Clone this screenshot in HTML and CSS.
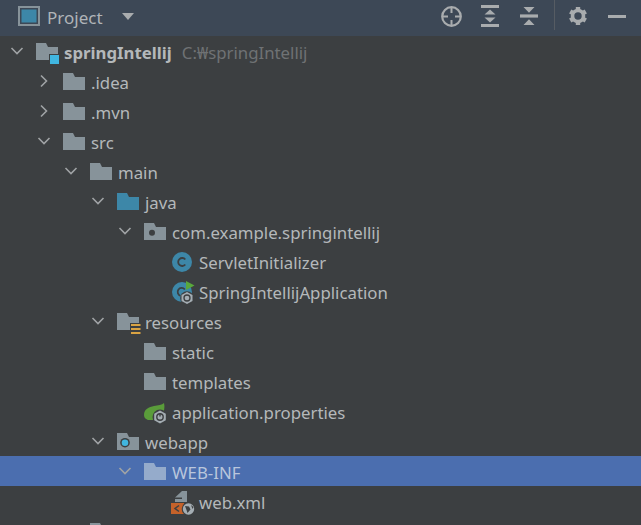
FILE: index.html
```html
<!DOCTYPE html>
<html lang="en">
<head>
<meta charset="utf-8">
<title>Project</title>
<link rel="stylesheet" href="styles.css">
</head>
<body>
<svg class="defs" width="0" height="0" aria-hidden="true">
  <symbol id="down" viewBox="0 0 14 14"><path d="M1.500 4 7 9.500 12.500 4" fill="none" stroke="#a0a3a5" stroke-width="1.600"/></symbol>
  <symbol id="right" viewBox="0 0 14 14"><path d="M4 1.500 9.500 7 4 12.500" fill="none" stroke="#a0a3a5" stroke-width="1.600"/></symbol>
  <symbol id="folder" viewBox="0 0 22 22"><path d="M0 3h10l2 4h10v13H0z" fill="#87939a"/></symbol>
  <symbol id="folder-blue" viewBox="0 0 22 22"><path d="M0 3h10l2 4h10v13H0z" fill="#3d87a8"/></symbol>
  <symbol id="folder-sel" viewBox="0 0 22 22"><path d="M0 3h10l2 4h10v13H0z" fill="#95abcb"/></symbol>
  <symbol id="folder-pkg" viewBox="0 0 22 22"><path d="M0 3h10l2 4h10v13H0z" fill="#87939a"/><circle cx="8" cy="12.700" r="3" fill="#3c3f41"/></symbol>
  <symbol id="folder-web" viewBox="0 0 22 22"><path d="M0 3h10l2 4h10v13H0z" fill="#87939a"/><circle cx="8" cy="12.700" r="4.800" fill="#3c3f41"/><circle cx="8" cy="12.700" r="3.300" fill="#40b6e0"/></symbol>
  <symbol id="cls" viewBox="0 0 22 22"><circle cx="11" cy="12" r="10" fill="#3d87a8"/><path d="M14.300 9.500A4 4 0 1 0 14.300 14.500" fill="none" stroke="#3c3f41" stroke-width="1.800"/></symbol>
  <symbol id="folder-root" viewBox="0 0 24 26"><path d="M0 5h10l2 4h10v7h-9v6H0z" fill="#87939a"/><rect x="14" y="17" width="9" height="9" fill="#40b6e0"/></symbol>
  <symbol id="folder-res" viewBox="0 0 24 26"><path d="M0 5h10l2 4h10v6h-9v7H0z" fill="#87939a"/><path d="M14 16h9.500v2H14zM14 20h9.500v2H14zM14 24h9.500v2H14z" fill="#d9a343"/></symbol>
  <symbol id="cls-spring" viewBox="0 0 24 26"><circle cx="11" cy="14" r="10" fill="#3d87a8"/><path d="M13.800 11.500A4 4 0 1 0 9.500 17.800" fill="none" stroke="#3c3f41" stroke-width="1.800"/><path d="M15 3l8.500 4.500L15 12z" fill="#59a83c"/><circle cx="16" cy="20" r="6.800" fill="#3c3f41"/><path d="M16 14l5.500 3v6L16 26l-5.500-3v-6z" fill="#a4adb3"/><circle cx="16" cy="20" r="3" fill="none" stroke="#3c3f41" stroke-width="1.300"/></symbol>
  <symbol id="spring" viewBox="0 0 24 26"><path d="M0 17C0 11 5 9 10 8c4-1 8-1 10-3 1 4 0 6 0 8l-8 9H4c-3-1-4-3-4-5z" fill="#5a9c3a"/><circle cx="16" cy="19" r="7.500" fill="#3c3f41"/><path d="M16 12.500l5.800 3.300v6.400L16 25.500l-5.800-3.300v-6.400z" fill="#a4adb3"/><circle cx="16" cy="19" r="3.200" fill="none" stroke="#3c3f41" stroke-width="1.400"/><path d="M16 15.500v3" stroke="#3c3f41" stroke-width="1.400"/></symbol>
  <symbol id="xml" viewBox="0 0 24 30"><path d="M11 5h5v11H4v-3h7z" fill="#87939a"/><path d="M4 11.500 11 5v6.500z" fill="#87939a"/><rect y="17" width="13" height="11" fill="#c5622a"/><path d="M8 19.500l-4 3 4 3" fill="none" stroke="#3c3f41" stroke-width="1.500"/><circle cx="17.500" cy="23" r="6.800" fill="#3c3f41"/><circle cx="17.500" cy="23" r="5.700" fill="#a4adb3"/><path d="M14 20l4 .5 1.500 3-3 3.500-1-3zM20 19l2.500 2-1 2z" fill="#3c3f41"/></symbol>
  <symbol id="ico-project" viewBox="0 0 22 20"><rect x="1" y="1" width="20" height="18" fill="none" stroke="#87939a" stroke-width="2"/><rect x="3.500" y="3.500" width="15" height="13" fill="#3d87a8"/></symbol>
  <symbol id="ico-target" viewBox="0 0 21 21"><circle cx="10.500" cy="10.500" r="9.300" fill="none" stroke="#a9acae" stroke-width="2.200"/><path d="M10.500 1v6M10.500 14v6M1 10.500h6M14 10.500h6" stroke="#a9acae" stroke-width="2"/></symbol>
  <symbol id="ico-expand" viewBox="0 0 18 22"><path d="M0 1.500h18M0 20.500h18" stroke="#a9acae" stroke-width="3"/><path d="M9 4.500l5.500 5H3.500zM9 17.500l5.500-5H3.500z" fill="#a9acae"/></symbol>
  <symbol id="ico-collapse" viewBox="0 0 18 22"><path d="M0 11h18" stroke="#a9acae" stroke-width="3.200"/><path d="M9 7.700l5.500-5.700H3.500zM9 14.300l5.500 5.700H3.500z" fill="#a9acae"/></symbol>
  <symbol id="ico-gear" viewBox="0 0 18 18"><circle cx="9" cy="9" r="5.500" fill="none" stroke="#a9acae" stroke-width="3.600"/><g fill="#a9acae"><rect x="6.800" y="0" width="4.400" height="4"/><rect x="6.800" y="14" width="4.400" height="4"/><rect x="6.800" y="0" width="4.400" height="4" transform="rotate(60 9 9)"/><rect x="6.800" y="0" width="4.400" height="4" transform="rotate(120 9 9)"/><rect x="6.800" y="0" width="4.400" height="4" transform="rotate(240 9 9)"/><rect x="6.800" y="0" width="4.400" height="4" transform="rotate(300 9 9)"/></g></symbol>
</svg>

<main class="panel">
  <header class="toolbar">
    <svg class="tool-project"><use href="#ico-project"/></svg>
    <span class="tool-title">Project</span>
    <span class="tool-caret"></span>
    <div class="tool-actions">
      <svg class="tool-target"><use href="#ico-target"/></svg>
      <svg class="tool-expand"><use href="#ico-expand"/></svg>
      <svg class="tool-collapse"><use href="#ico-collapse"/></svg>
      <span class="tool-sep"></span>
      <svg class="tool-gear"><use href="#ico-gear"/></svg>
      <span class="tool-minus"></span>
    </div>
  </header>
  <div class="tree">
    <div class="row l0"><svg class="chev"><use href="#down"/></svg><svg class="icon big root"><use href="#folder-root"/></svg><span class="name bold">springIntellij</span><span class="path">C:₩springIntellij</span></div>
    <div class="row l1"><svg class="chev"><use href="#right"/></svg><svg class="icon"><use href="#folder"/></svg><span class="name">.idea</span></div>
    <div class="row l1"><svg class="chev"><use href="#right"/></svg><svg class="icon"><use href="#folder"/></svg><span class="name">.mvn</span></div>
    <div class="row l1"><svg class="chev"><use href="#down"/></svg><svg class="icon"><use href="#folder"/></svg><span class="name">src</span></div>
    <div class="row l2"><svg class="chev"><use href="#down"/></svg><svg class="icon"><use href="#folder"/></svg><span class="name">main</span></div>
    <div class="row l3"><svg class="chev"><use href="#down"/></svg><svg class="icon"><use href="#folder-blue"/></svg><span class="name">java</span></div>
    <div class="row l4"><svg class="chev"><use href="#down"/></svg><svg class="icon"><use href="#folder-pkg"/></svg><span class="name">com.example.springintellij</span></div>
    <div class="row l5"><span class="chev"></span><svg class="icon"><use href="#cls"/></svg><span class="name">ServletInitializer</span></div>
    <div class="row l5"><span class="chev"></span><svg class="icon big"><use href="#cls-spring"/></svg><span class="name">SpringIntellijApplication</span></div>
    <div class="row l3"><svg class="chev"><use href="#down"/></svg><svg class="icon big"><use href="#folder-res"/></svg><span class="name">resources</span></div>
    <div class="row l4"><span class="chev"></span><svg class="icon"><use href="#folder"/></svg><span class="name">static</span></div>
    <div class="row l4"><span class="chev"></span><svg class="icon"><use href="#folder"/></svg><span class="name">templates</span></div>
    <div class="row l4"><span class="chev"></span><svg class="icon big"><use href="#spring"/></svg><span class="name">application.properties</span></div>
    <div class="row l3"><svg class="chev"><use href="#down"/></svg><svg class="icon"><use href="#folder-web"/></svg><span class="name">webapp</span></div>
    <div class="row l4 selected"><svg class="chev"><use href="#down"/></svg><svg class="icon"><use href="#folder-sel"/></svg><span class="name">WEB-INF</span></div>
    <div class="row l5"><span class="chev"></span><svg class="icon tall"><use href="#xml"/></svg><span class="name">web.xml</span></div>
    <div class="row l2"><svg class="chev"><use href="#right"/></svg><svg class="icon"><use href="#folder"/></svg></div>
  </div>
</main>
</body>
</html>
```
FILE: styles.css
```css
html, body {
  margin: 0;
  padding: 0;
  height: 100%;
  overflow: hidden;
  background: #3c3f41;
}
.defs { position: absolute; }
.panel {
  height: 525px;
  overflow: hidden;
  font-family: "Noto Sans", "Open Sans", sans-serif;
  font-size: 16.8px;
  color: #b4b8ba;
}
.toolbar {
  height: 36px;
  box-sizing: border-box;
  background: #3d4856;
  display: flex;
  align-items: center;
  padding: 0 15px 4px 18px;
}
.tool-project { width: 22px; height: 20px; margin-right: 7px; }
.tool-title { font-size: 17px; color: #b0b4b8; margin-right: 19px; position: relative; top: 1px; }
.tool-caret {
  width: 0;
  height: 0;
  border-left: 6px solid transparent;
  border-right: 6px solid transparent;
  border-top: 7px solid #a9acae;
}
.tool-actions {
  margin-left: auto;
  display: flex;
  align-items: center;
}
.tool-target { width: 21px; height: 21px; display: block; }
.tool-expand { width: 18px; height: 22px; display: block; margin-left: 19px; }
.tool-collapse { width: 18px; height: 22px; display: block; margin-left: 21px; }
.tool-sep { width: 1px; height: 30px; background: #565c63; margin: 0 0 2px 16px; }
.tool-gear { width: 18px; height: 18px; display: block; margin-left: 14px; }
.tool-minus { width: 18px; height: 3px; background: #a9acae; margin-left: 21px; }
.row {
  height: 30px;
  display: flex;
  align-items: center;
}
.l0 { padding-left: 10px; }
.l1 { padding-left: 37px; }
.l2 { padding-left: 64px; }
.l3 { padding-left: 91px; }
.l4 { padding-left: 118px; }
.l5 { padding-left: 145px; }
.selected { background: #4b6eaf; }
.selected .name { color: #b9c6dc; }
.chev { width: 14px; height: 14px; margin-right: 12px; flex: none; }
.icon { width: 22px; height: 22px; margin-right: 6px; flex: none; overflow: visible; }
.big { width: 24px; height: 26px; margin-right: 4px; }
.tall { width: 24px; height: 30px; margin-right: 4px; }
.root { margin-right: 4px; }
.name { white-space: nowrap; position: relative; top: 1px; }
.bold { font-weight: 700; margin-right: 10px; }
.path { color: #6f7274; white-space: nowrap; position: relative; top: 1px; }
```
